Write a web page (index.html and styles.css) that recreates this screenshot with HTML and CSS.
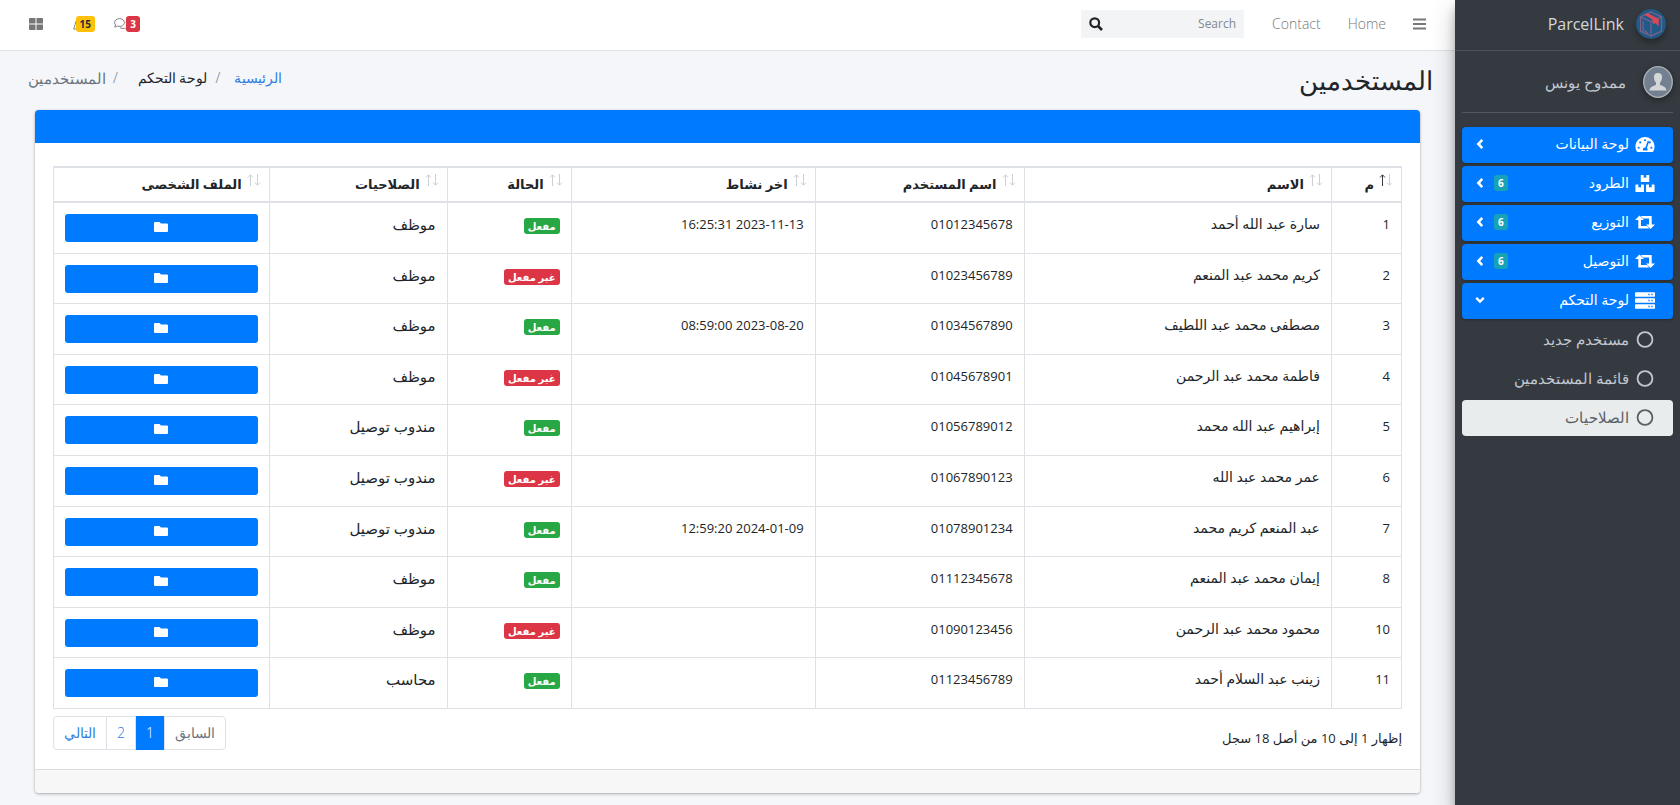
FILE: index.html
```html
<!DOCTYPE html>
<html lang="ar" dir="rtl">
<head>
<meta charset="utf-8">
<meta name="viewport" content="width=device-width, initial-scale=1">
<title>ParcelLink - المستخدمين</title>
<link rel="stylesheet" href="styles.css">
</head>
<body>
<svg class="sprite" aria-hidden="true">
  <symbol id="left" viewBox="0 0 10 16"><path d="M8 2.500 2.800 8l5.200 5.500" fill="none" stroke="currentColor" stroke-width="3.400"/></symbol>
  <symbol id="down" viewBox="0 0 12 10"><path d="M1.500 2.500 6 7l4.500-4.500" fill="none" stroke="currentColor" stroke-width="2.800"/></symbol>
  <symbol id="gauge" viewBox="0 0 576 512"><path fill="currentColor" fill-rule="evenodd" d="M288 32C129 32 0 161 0 320c0 53 14 102 39 145 6 9 16 15 27 15h444c11 0 21-6 27-15 25-43 39-92 39-145C576 161 447 32 288 32zm0 64a32 32 0 1 1 0 64 32 32 0 0 1 0-64zM96 384a32 32 0 1 1 0-64 32 32 0 0 1 0 64zm48-160a32 32 0 1 1 0-64 32 32 0 0 1 0 64zm247-77c13 4 20 18 16 30l-61 184c13 11 22 28 22 47 0 12-3 22-9 32H233a64 64 0 0 1 68-94l61-184c4-12 17-19 29-15zm41 77a32 32 0 1 1 0-64 32 32 0 0 1 0 64zm48 160a32 32 0 1 1 0-64 32 32 0 0 1 0 64z"/></symbol>
  <symbol id="boxes" viewBox="0 0 576 512"><path fill="currentColor" d="M176 0h72v88l40-22 40 22V0h72c9 0 16 7 16 16v176c0 9-7 16-16 16H176c-9 0-16-7-16-16V16c0-9 7-16 16-16zM16 288h72v96l40-22 40 22v-96h72c9 0 16 7 16 16v192c0 9-7 16-16 16H16c-9 0-16-7-16-16V304c0-9 7-16 16-16zm320 0h72v96l40-22 40 22v-96h72c9 0 16 7 16 16v192c0 9-7 16-16 16H336c-9 0-16-7-16-16V304c0-9 7-16 16-16z"/></symbol>
  <symbol id="retweet" viewBox="0 0 20 14"><path fill="currentColor" d="M4.500 0 9 4.600H6v6h6l2.200 2.400H3.300V4.600H0zM15.500 13.500 11 8.900h3v-6H8L5.800.500h10.900v8.400H20z"/></symbol>
  <symbol id="server" viewBox="0 0 18 15"><path fill="currentColor" fill-rule="evenodd" d="M.8 0h16.400q.8 0 .8.800v2.600q0 .800-.8.800H.8Q0 4.200 0 3.400V.800Q0 0 .8 0zm0 5.400h16.400q.8 0 .8.800v2.600q0 .800-.8.800H.8Q0 9.600 0 8.800V6.200q0-.8.800-.8zm0 5.400h16.400q.8 0 .8.800v2.600q0 .800-.8.800H.8Q0 15 0 14.200v-2.600q0-.8.800-.8zM12 1.500h1.200v1.200H12zm2.700 0h1.200v1.200h-1.200zM12 6.900h1.200v1.200H12zm2.700 0h1.200v1.200h-1.200zM12 12.300h1.200v1.200H12zm2.700 0h1.200v1.200h-1.200z"/></symbol>
  <symbol id="ring" viewBox="0 0 16 16"><circle cx="8" cy="8" r="7" fill="none" stroke="currentColor" stroke-width="1.700"/></symbol>
  <symbol id="folder" viewBox="0 0 14 11"><path fill="currentColor" d="M1 .500h4.500L7 2h6q1 0 1 1v6.500q0 1-1 1H1q-1 0-1-1v-8q0-1 1-1z"/></symbol>
  <symbol id="sort" viewBox="0 0 14 12"><g fill="none"><path class="sort-up" d="M3.500 12V1M1 3.500l2.500-2.700L6 3.500"/><path stroke="#cdd0d3" d="M10.500 0v11M8 8.500l2.500 2.700L13 8.500"/></g></symbol>
</svg>

<div class="layout">
  <aside class="sidebar">
    <a class="brand" href="#">
      <svg class="brand-logo" viewBox="0 0 30 30" aria-hidden="true">
        <circle cx="15" cy="15" r="15" fill="#215a88"/>
        <g fill="none" stroke="#7b6288" stroke-width="1.200"><path d="M4.500 8 15 3l10.500 5v14L15 27 4.500 22zM4.500 8 15 12.500 25.500 8M15 12.500V27M7 12v9l5 3"/></g>
        <path d="m8 5.500 3.500-1.500 11.500 6-.5 7.500-3-3.500-2.500 1.500-.5-5z" fill="#dc4659"/>
      </svg>
      <span>ParcelLink</span>
    </a>
    <div class="side-body">
      <a class="user" href="#">
        <svg class="avatar" viewBox="0 0 30 32" aria-hidden="true">
          <ellipse cx="15" cy="16" rx="14.300" ry="15.300" fill="#738091" stroke="#adb1b5" stroke-width="1.300"/>
          <path d="M15 7c-3 0-4.300 2-4 4.800.2 2.400 1 3.800 2 4.800v2.200c-1.500 1.200-6 1.500-6.500 5.700h17c-.5-4.200-5-4.500-6.500-5.700v-2.200c1-1 1.800-2.400 2-4.800C19.300 9 18 7 15 7z" fill="#d4d6d8"/>
        </svg>
        <span>ممدوح يونس</span>
      </a>
      <nav class="menu">
        <a class="item main" href="#"><svg class="ico"><use href="#gauge"/></svg><span class="label">لوحة البيانات</span><svg class="arrow"><use href="#left"/></svg></a>
        <a class="item main" href="#"><svg class="ico"><use href="#boxes"/></svg><span class="label">الطرود</span><span class="badge info">6</span><svg class="arrow"><use href="#left"/></svg></a>
        <a class="item main" href="#"><svg class="ico"><use href="#retweet"/></svg><span class="label">التوزيع</span><span class="badge info">6</span><svg class="arrow"><use href="#left"/></svg></a>
        <a class="item main" href="#"><svg class="ico"><use href="#retweet"/></svg><span class="label">التوصيل</span><span class="badge info">6</span><svg class="arrow"><use href="#left"/></svg></a>
        <a class="item main" href="#"><svg class="ico"><use href="#server"/></svg><span class="label">لوحة التحكم</span><svg class="arrow"><use href="#down"/></svg></a>
        <a class="item" href="#"><svg class="ico"><use href="#ring"/></svg><span class="label">مستخدم جديد</span></a>
        <a class="item" href="#"><svg class="ico"><use href="#ring"/></svg><span class="label">قائمة المستخدمين</span></a>
        <a class="item active" href="#"><svg class="ico"><use href="#ring"/></svg><span class="label">الصلاحيات</span></a>
      </nav>
    </div>
  </aside>

  <div class="page">
    <header class="navbar">
      <button class="icon-btn" type="button" aria-label="القائمة"><svg width="13" height="12" viewBox="0 0 13 12"><path d="M0 1.500h13M0 6h13M0 10.500h13" stroke="currentColor" stroke-width="1.800"/></svg></button>
      <a class="top-link" href="#">Home</a>
      <a class="top-link" href="#">Contact</a>
      <form class="search">
        <input type="search" placeholder="Search" aria-label="Search">
        <button type="button" aria-label="بحث"><svg width="14" height="14" viewBox="0 0 14 14"><circle cx="5.700" cy="5.700" r="4.400" fill="none" stroke="currentColor" stroke-width="2.200"/><path d="m9 9 4 4" stroke="currentColor" stroke-width="2.600"/></svg></button>
      </form>
      <div class="tools">
        <a class="tool" href="#" aria-label="الرسائل">
          <svg width="14" height="12" viewBox="0 0 14 12" fill="none" stroke="currentColor"><path d="M5.500.6C2.800.6.600 2.300.600 4.500c0 1 .4 1.900 1.100 2.500L.6 9c1.300 0 2.200-.4 2.900-.9 3.900 1 6.900-.9 6.900-3.600C10.400 2.300 8.200.600 5.500.600zM6 9.500c1 .9 2.800 1.200 4.400.7.700.5 1.700.9 2.900.9l-1.100-2c1.400-1.400 1.300-3.500-.3-4.700"/></svg>
          <span class="badge danger">3</span>
        </a>
        <a class="tool bell" href="#" aria-label="التنبيهات">
          <svg width="12" height="13" viewBox="0 0 12 13" fill="none" stroke="currentColor"><path d="M6 1C3.500 1 3 3 2.500 5S1.500 8.500.700 11h10.600C10.500 8.500 10 7 9.500 5S8.500 1 6 1zM4.500 12.500h3"/></svg>
          <span class="badge warning">15</span>
        </a>
        <button class="icon-btn" type="button" aria-label="عرض"><svg width="14" height="12" viewBox="0 0 14 12"><path fill="currentColor" d="M1 0h5.500v5.500H0V1q0-1 1-1zm6.500 0H13q1 0 1 1v4.500H7.500zM0 6.500h6.500V12H1q-1 0-1-1zm7.500 0H14V11q0 1-1 1H7.500z"/></svg></button>
      </div>
    </header>

    <main class="content">
      <div class="head">
        <h1>المستخدمين</h1>
        <nav class="crumbs">
          <a href="#">الرئيسية</a><span class="sep">/</span><span class="mid">لوحة التحكم</span><span class="sep wide">/</span><span class="last">المستخدمين</span>
        </nav>
      </div>

      <section class="card">
        <div class="card-header"></div>
        <div class="card-body">
          <table class="grid">
            <colgroup><col class="c1"><col class="c2"><col class="c3"><col class="c4"><col class="c5"><col class="c6"><col class="c7"></colgroup>
            <thead>
              <tr>
                <th class="sorted"><span class="th"><svg><use href="#sort"/></svg>م</span></th>
                <th><span class="th"><svg><use href="#sort"/></svg>الاسم</span></th>
                <th><span class="th"><svg><use href="#sort"/></svg>اسم المستخدم</span></th>
                <th><span class="th"><svg><use href="#sort"/></svg>اخر نشاط</span></th>
                <th><span class="th"><svg><use href="#sort"/></svg>الحالة</span></th>
                <th><span class="th"><svg><use href="#sort"/></svg>الصلاحيات</span></th>
                <th><span class="th"><svg><use href="#sort"/></svg>الملف الشخصى</span></th>
              </tr>
            </thead>
            <tbody>
              <tr><td>1</td><td class="name">سارة عبد الله أحمد</td><td>01012345678</td><td>2023-11-13 16:25:31</td><td><span class="badge success">مفعل</span></td><td class="role">موظف</td><td><button class="file" type="button" aria-label="الملف"><svg><use href="#folder"/></svg></button></td></tr>
              <tr><td>2</td><td class="name">كريم محمد عبد المنعم</td><td>01023456789</td><td></td><td><span class="badge danger">غير مفعل</span></td><td class="role">موظف</td><td><button class="file" type="button" aria-label="الملف"><svg><use href="#folder"/></svg></button></td></tr>
              <tr><td>3</td><td class="name">مصطفى محمد عبد اللطيف</td><td>01034567890</td><td>2023-08-20 08:59:00</td><td><span class="badge success">مفعل</span></td><td class="role">موظف</td><td><button class="file" type="button" aria-label="الملف"><svg><use href="#folder"/></svg></button></td></tr>
              <tr><td>4</td><td class="name">فاطمة محمد عبد الرحمن</td><td>01045678901</td><td></td><td><span class="badge danger">غير مفعل</span></td><td class="role">موظف</td><td><button class="file" type="button" aria-label="الملف"><svg><use href="#folder"/></svg></button></td></tr>
              <tr><td>5</td><td class="name">إبراهيم عبد الله محمد</td><td>01056789012</td><td></td><td><span class="badge success">مفعل</span></td><td class="role">مندوب توصيل</td><td><button class="file" type="button" aria-label="الملف"><svg><use href="#folder"/></svg></button></td></tr>
              <tr><td>6</td><td class="name">عمر محمد عبد الله</td><td>01067890123</td><td></td><td><span class="badge danger">غير مفعل</span></td><td class="role">مندوب توصيل</td><td><button class="file" type="button" aria-label="الملف"><svg><use href="#folder"/></svg></button></td></tr>
              <tr><td>7</td><td class="name">عبد المنعم كريم محمد</td><td>01078901234</td><td>2024-01-09 12:59:20</td><td><span class="badge success">مفعل</span></td><td class="role">مندوب توصيل</td><td><button class="file" type="button" aria-label="الملف"><svg><use href="#folder"/></svg></button></td></tr>
              <tr><td>8</td><td class="name">إيمان محمد عبد المنعم</td><td>01112345678</td><td></td><td><span class="badge success">مفعل</span></td><td class="role">موظف</td><td><button class="file" type="button" aria-label="الملف"><svg><use href="#folder"/></svg></button></td></tr>
              <tr><td>10</td><td class="name">محمود محمد عبد الرحمن</td><td>01090123456</td><td></td><td><span class="badge danger">غير مفعل</span></td><td class="role">موظف</td><td><button class="file" type="button" aria-label="الملف"><svg><use href="#folder"/></svg></button></td></tr>
              <tr><td>11</td><td class="name">زينب عبد السلام أحمد</td><td>01123456789</td><td></td><td><span class="badge success">مفعل</span></td><td class="role">محاسب</td><td><button class="file" type="button" aria-label="الملف"><svg><use href="#folder"/></svg></button></td></tr>
            </tbody>
          </table>
          <div class="table-foot">
            <p class="info-text">إظهار 1 إلى 10 من أصل 18 سجل</p>
            <nav class="pager">
              <a class="prev" href="#">السابق</a><a class="current" href="#">1</a><a href="#">2</a><a class="next" href="#">التالي</a>
            </nav>
          </div>
        </div>
        <div class="card-footer"></div>
      </section>
    </main>
  </div>
</div>
</body>
</html>
```
FILE: styles.css
```css
* { box-sizing: border-box; }
body {
  margin: 0;
  background: #f4f6f9;
  color: #212529;
  font: 300 13px/20px "Open Sans", "Noto Sans", "DejaVu Sans", sans-serif;
}
a { color: inherit; text-decoration: none; }
button, input { font: inherit; color: inherit; border: 0; background: none; padding: 0; }
svg { display: block; flex: none; }
.sprite { position: absolute; width: 0; height: 0; }

.layout { display: flex; min-height: 100vh; }
.page { flex: 1; min-width: 0; }

.sidebar {
  width: 225px;
  flex: none;
  background: #343a40;
  color: #c2c7d0;
  box-shadow: 0 11px 22px rgba(0, 0, 0, .25), 0 8px 8px rgba(0, 0, 0, .22);
  z-index: 1;
}
.brand {
  display: flex;
  align-items: center;
  gap: 12px;
  height: 51px;
  padding: 0 14px 2px;
  border-bottom: 1px solid #4b545c;
  color: #d5d7d9;
  font-size: 16px;
  font-weight: 400;
}
.brand-logo { width: 30px; height: 30px; border-radius: 50%; box-shadow: 0 4px 6px rgba(0, 0, 0, .3); }
.side-body { padding: 0 7px; }
.user {
  display: flex;
  align-items: center;
  gap: 17px;
  height: 62px;
  border-bottom: 1px solid #4f5962;
  font-size: 15px;
}
.avatar { width: 30px; height: 32px; filter: drop-shadow(0 2px 3px rgba(0, 0, 0, .4)); }
.menu { display: flex; flex-direction: column; gap: 3px; padding-top: 14px; }
.item {
  display: flex;
  align-items: center;
  height: 36px;
  padding: 0 18px 2px 13px;
  border-radius: 4px;
  font-size: 15px;
}
.item .ico { width: 20px; height: 17px; margin-left: 6px; }
.item .label { flex: 1; }
.item .arrow { width: 10px; height: 12px; }
.item.main { background: #007bff; color: #fff; box-shadow: 0 1px 3px rgba(0, 0, 0, .25); font-size: 14px; font-weight: 400; }
.item.active { background: #e9ecec; color: #5b6065; }

.badge {
  display: inline-block;
  padding: 0 4px;
  border-radius: 3px;
  color: #fff;
  font-size: 10px;
  font-weight: 700;
  line-height: 16px;
  text-align: center;
}
.badge.info { background: #17a2b8; margin-left: 9px; }
.badge.success { background: #28a745; }
.badge.danger { background: #dc3545; }
.badge.warning { background: #ffc107; color: #1f2d3d; }

.navbar {
  display: flex;
  align-items: center;
  height: 51px;
  padding: 0 29px 2px;
  background: #fff;
  border-bottom: 1px solid #dee2e6;
  color: #808080;
}
.icon-btn { color: #777; }
.top-link { margin-right: 27px; color: #777; font-size: 14px; }
.search {
  display: flex;
  align-items: center;
  width: 163px;
  height: 28px;
  margin-right: 28px;
  padding: 0 8px;
  background: #f2f4f6;
}
.search input { flex: 1; min-width: 0; font-size: 12px; font-weight: 400; outline: 0; }
.search input::placeholder { color: #808890; opacity: 1; }
.search button { color: #212529; }
.tools { display: flex; align-items: center; gap: 19px; margin-right: auto; }
.tool { position: relative; width: 26px; height: 16px; display: flex; justify-content: flex-end; align-items: center; }
.tool .badge { position: absolute; right: 0; top: 0; }
.tool.bell { width: 22px; margin-left: 11px; }

.content { padding: 0 22px 9px; }
.head { display: flex; justify-content: space-between; align-items: flex-start; height: 59px; padding-top: 14px; }
h1 { margin: 0; font-size: 26px; font-weight: 300; line-height: 30px; }
.crumbs { display: flex; padding: 3px 0 0 6px; color: #6c757d; font-size: 14px; }
.crumbs a { color: #2f7de0; }
.crumbs .mid { color: #212529; }
.crumbs .last { font-size: 15px; }
.crumbs .sep { margin: 0 14px 0 8px; }
.crumbs .wide { margin-right: 20px; margin-left: 7px; }

.card {
  margin: 0 13px;
  background: #fff;
  border-radius: 4px;
  box-shadow: 0 0 1px rgba(0, 0, 0, .2), 0 1px 3px rgba(0, 0, 0, .3);
  overflow: hidden;
}
.card-header { height: 33px; background: #007bff; }
.card-body { padding: 23px 18px 19px; }
.card-footer { height: 24px; background: #f7f7f7; border-top: 1px solid #dcdcdc; }

.grid {
  width: 100%;
  height: 543px;
  table-layout: fixed;
  border-collapse: collapse;
  text-align: right;
}
.c1 { width: 5.2%; }
.c2 { width: 22.8%; }
.c3 { width: 15.5%; }
.c4 { width: 18.1%; }
.c5 { width: 9.2%; }
.c6 { width: 13.2%; }
.c7 { width: 16%; }
.grid th, .grid td { border: 1px solid #dee2e6; padding: 10px 11px; vertical-align: top; }
.grid td { padding-top: 11px; font-weight: 400; }
.grid .name { font-size: 14px; }
.grid .role { font-size: 15px; }
.grid th { border-top-width: 2px; border-bottom-width: 2px; padding: 6px 8px 7px; height: 35px; font-weight: 600; }
.th { display: flex; gap: 4px; }
.th svg { width: 14px; height: 12px; margin-left: 1px; color: #cdd0d3; }
.sort-up { stroke: currentColor; }
.sorted .th svg { color: #343a40; }
.grid td .badge { margin-top: 4px; }
.file {
  display: flex;
  justify-content: center;
  align-items: center;
  width: 100%;
  height: 28px;
  padding-bottom: 2px;
  border-radius: 3px;
  background: #007bff;
  color: #fff;
}
.file svg { width: 14px; height: 12px; }

.table-foot { display: flex; justify-content: space-between; align-items: flex-start; padding-top: 7px; }
.info-text { margin: 0; padding-top: 12px; font-weight: 400; }
.pager { display: flex; border: 1px solid #dee2e6; border-radius: 4px; color: #2f7de0; font-size: 14px; }
.pager a { padding: 6px 10px; border-right: 1px solid #dee2e6; line-height: 20px; }
.pager .prev { border-right: 0; color: #6c757d; }
.pager .current { background: #007bff; color: #fff; margin: -1px 0; padding: 7px 10px; }
```
